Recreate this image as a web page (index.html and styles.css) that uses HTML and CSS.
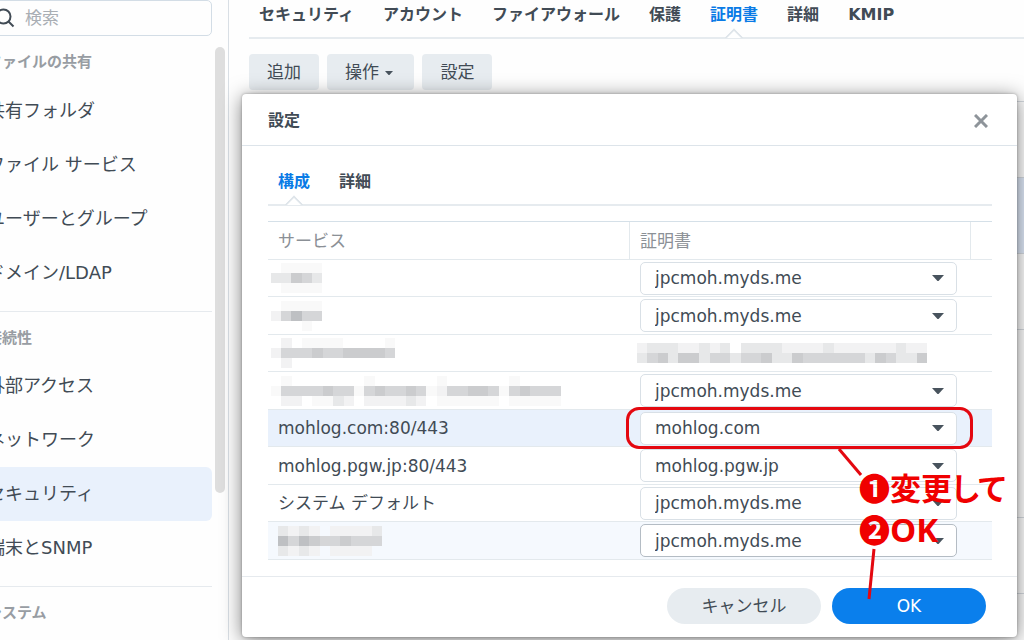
FILE: index.html
```html
<!DOCTYPE html>
<html lang="ja">
<head>
<meta charset="utf-8">
<title>セキュリティ - 証明書</title>
<link rel="stylesheet" href="styles.css">
</head>
<body>
<div class="app">
  <aside class="sidebar">
    <div class="nav">
      <label class="search">
        <svg class="search-icon" viewBox="0 0 20 20" width="20" height="20" aria-hidden="true"><circle cx="8.500" cy="8.500" r="7"/><path d="M13.500 13.500l5 5"/></svg>
        <input type="text" placeholder="検索" aria-label="検索">
      </label>
      <section class="group">
        <h2>ファイルの共有</h2>
        <a href="#">共有フォルダ</a>
        <a href="#">ファイル サービス</a>
        <a href="#">ユーザーとグループ</a>
        <a href="#">ドメイン/LDAP</a>
      </section>
      <section class="group">
        <h2>接続性</h2>
        <a href="#">外部アクセス</a>
        <a href="#">ネットワーク</a>
        <a href="#" class="active">セキュリティ</a>
        <a href="#">端末とSNMP</a>
      </section>
      <section class="group">
        <h2>システム</h2>
      </section>
    </div>
    <div class="scrollbar"></div>
  </aside>
  <main class="main">
    <nav class="tabs">
      <a href="#">セキュリティ</a>
      <a href="#">アカウント</a>
      <a href="#">ファイアウォール</a>
      <a href="#">保護</a>
      <a href="#" class="current">証明書</a>
      <a href="#">詳細</a>
      <a href="#">KMIP</a>
    </nav>
    <div class="toolbar">
      <button type="button">追加</button>
      <button type="button">操作 <svg class="caret" viewBox="0 0 12 6" width="8" height="4" aria-hidden="true"><path d="M0 0h12l-5 5.500q-1 1-2 0z"/></svg></button>
      <button type="button">設定</button>
    </div>
    <div class="certs">
      <div class="cert"></div>
      <div class="cert picked"></div>
      <div class="cert"></div>
      <div class="cert tall"></div>
      <div class="cert"></div>
      <div class="cert"></div>
    </div>
  </main>
</div>

<div class="dialog" role="dialog" aria-labelledby="dialog-title">
  <header class="dialog-head">
    <h1 id="dialog-title">設定</h1>
    <button type="button" class="close" aria-label="閉じる"><svg viewBox="0 0 14 14" width="14" height="14" aria-hidden="true"><path d="M1 1l12 12M13 1l-12 12"/></svg></button>
  </header>
  <div class="dialog-body">
    <nav class="tabs inner">
      <a href="#" class="current">構成</a>
      <a href="#">詳細</a>
    </nav>
    <table class="services">
      <colgroup><col><col class="col-cert"><col class="col-end"></colgroup>
      <thead><tr><th scope="col">サービス</th><th scope="col">証明書</th><th></th></tr></thead>
      <tbody>
        <tr>
          <td><svg class="mosaic lead w5" viewBox="0 0 5 3" preserveAspectRatio="none"><path class="g1" d="M1 0h4v3h-4z"/><path class="g3" d="M0 1h2v1h-2zM4 1h1v1h-1z"/><path class="g5" d="M2 1h1v1h-1z"/><path class="g4" d="M3 1h1v1h-1z"/></svg></td>
          <td><div class="pick"><select aria-label="証明書 1"><option>jpcmoh.myds.me</option></select><svg class="caret" viewBox="0 0 12 6" width="12" height="6"><path d="M0 0h12l-5 5.500q-1 1-2 0z"/></svg></div></td><td></td>
        </tr>
        <tr>
          <td><svg class="mosaic lead w5" viewBox="0 0 5 3" preserveAspectRatio="none"><path class="g1" d="M1 0h4v1h-4zM3 2h1v1h-1z"/><path class="g2" d="M0 1h1v1h-1z"/><path class="g4" d="M1 1h1v1h-1zM3 1h2v1h-2z"/><path class="g6" d="M2 1h1v1h-1z"/></svg></td>
          <td><div class="pick"><select aria-label="証明書 2"><option>jpcmoh.myds.me</option></select><svg class="caret" viewBox="0 0 12 6" width="12" height="6"><path d="M0 0h12l-5 5.500q-1 1-2 0z"/></svg></div></td><td></td>
        </tr>
        <tr>
          <td><svg class="mosaic lead w12" viewBox="0 0 12 3" preserveAspectRatio="none"><path class="g1" d="M3 0h4v1h-4zM11 0h1v1h-1z"/><path class="g2" d="M1 0h1v3h-1zM0 1h1v1h-1z"/><path class="g4" d="M1 1h11v1h-11z"/><path class="g5" d="M4 1h1v1h-1zM7 1h4v1h-4z"/></svg></td>
          <td><svg class="mosaic cert-name w28" viewBox="0 0 28 2" preserveAspectRatio="none"><path class="g2" d="M0 0h9v1h-9zM10 0h18v1h-18z"/><path class="g3" d="M0 1h28v1h-28zM1 0h3v1h-3zM6 0h1v1h-1zM8 0h1v1h-1zM10 0h4v1h-4zM18 0h1v1h-1zM25 0h1v1h-1z"/><path class="g4" d="M1 1h2v1h-2zM4 1h2v1h-2zM7 1h2v1h-2zM10 1h3v1h-3zM15 1h7v1h-7zM23 1h2v1h-2zM27 1h1v1h-1z"/><path class="g5" d="M2 1h1v1h-1zM4 1h2v1h-2zM12 1h1v1h-1zM15 1h1v1h-1zM23 1h1v1h-1zM27 1h1v1h-1z"/></svg></td><td></td>
        </tr>
        <tr>
          <td><svg class="mosaic lead w28" viewBox="0 0 28 3" preserveAspectRatio="none"><path class="g1" d="M1 0h1v1h-1zM9 0h1v1h-1zM16 0h1v1h-1zM23 0h1v1h-1zM4 2h2v1h-2zM16 2h6v1h-6zM23 2h5v1h-5zM0 1h28v1h-28z"/><path class="g2" d="M1 2h2v1h-2zM7 2h1v1h-1zM9 2h4v1h-4zM14 2h1v1h-1zM16 1h1v1h-1z"/><path class="g3" d="M6 2h1v1h-1zM13 2h1v1h-1z"/><path class="g4" d="M1 1h7v1h-7zM9 1h6v1h-6zM17 1h5v1h-5zM23 1h5v1h-5z"/><path class="g5" d="M5 1h1v1h-1zM10 1h1v1h-1zM13 1h1v1h-1zM19 1h2v1h-2zM24 1h1v1h-1z"/></svg></td>
          <td><div class="pick"><select aria-label="証明書 4"><option>jpcmoh.myds.me</option></select><svg class="caret" viewBox="0 0 12 6" width="12" height="6"><path d="M0 0h12l-5 5.500q-1 1-2 0z"/></svg></div></td><td></td>
        </tr>
        <tr class="selected">
          <td>mohlog.com:80/443</td>
          <td><div class="pick"><select aria-label="mohlog.com:80/443"><option>mohlog.com</option></select><svg class="caret" viewBox="0 0 12 6" width="12" height="6"><path d="M0 0h12l-5 5.500q-1 1-2 0z"/></svg></div></td><td></td>
        </tr>
        <tr>
          <td>mohlog.pgw.jp:80/443</td>
          <td><div class="pick"><select aria-label="mohlog.pgw.jp:80/443"><option>mohlog.pgw.jp</option></select><svg class="caret" viewBox="0 0 12 6" width="12" height="6"><path d="M0 0h12l-5 5.500q-1 1-2 0z"/></svg></div></td><td></td>
        </tr>
        <tr>
          <td>システム デフォルト</td>
          <td><div class="pick"><select aria-label="システム デフォルト"><option>jpcmoh.myds.me</option></select><svg class="caret" viewBox="0 0 12 6" width="12" height="6"><path d="M0 0h12l-5 5.500q-1 1-2 0z"/></svg></div></td><td></td>
        </tr>
        <tr class="hover">
          <td><svg class="mosaic w10" viewBox="0 0 10 3" preserveAspectRatio="none"><path class="g2" d="M0 0h4v3h-4zM5 0h5v1h-5zM5 2h4v1h-4z"/><path class="g3" d="M0 0h1v1h-1zM2 0h1v3h-1zM0 2h1v1h-1zM9 0h1v1h-1z"/><path class="g4" d="M1 1h9v1h-9z"/><path class="g5" d="M3 1h1v1h-1zM6 1h1v1h-1z"/><path class="g6" d="M0 1h1v1h-1zM2 1h1v1h-1z"/></svg></td>
          <td><div class="pick"><select aria-label="証明書 8"><option>jpcmoh.myds.me</option></select><svg class="caret" viewBox="0 0 12 6" width="12" height="6"><path d="M0 0h12l-5 5.500q-1 1-2 0z"/></svg></div></td><td></td>
        </tr>
      </tbody>
    </table>
  </div>
  <footer class="dialog-foot">
    <button type="button" class="pill">キャンセル</button>
    <button type="button" class="pill primary">OK</button>
  </footer>
  <div class="marks">
    <div class="mark-box"></div>
    <svg class="mark-lines" viewBox="0 0 60 160" width="60" height="160" aria-hidden="true"><path d="M10 9l22 26"/><path d="M45 109l-5 50"/></svg>
    <p class="note note-1">❶変更して</p>
    <p class="note note-2">❷<span class="latin">OK</span></p>
  </div>
</div>
</body>
</html>
```
FILE: styles.css
```css
* { box-sizing: border-box; }
body {
  margin: 0;
  height: 100vh;
  overflow: hidden;
  position: relative;
  background: #fefefe;
  color: #414b55;
  font: 17px/24px "DejaVu Sans", "Noto Sans CJK JP", sans-serif;
}
a { color: inherit; text-decoration: none; }
button, input, select { font: inherit; color: inherit; border: 0; }
h1, h2, p { margin: 0; }

.app { display: flex; height: 100%; }

/* Sidebar */
.sidebar {
  display: flex;
  gap: 3px;
  flex: 0 0 229px;
  border-right: 1px solid #d9dfe5;
  overflow: hidden;
}
.nav { flex: 1; min-width: 0; margin-left: -30px; }
.search {
  display: flex;
  align-items: center;
  gap: 10px;
  height: 36px;
  padding-left: 24px;
  border: 1px solid #d3dde6;
  border-radius: 5px;
}
.search-icon { flex: none; fill: none; stroke: #414b55; stroke-width: 2; }
.search input { flex: 1; min-width: 0; padding: 0; background: none; outline: 0; }
.search input::placeholder { color: #a9aeb4; opacity: 1; }
.group { padding-bottom: 11px; border-bottom: 1px solid #e6eaee; }
.group h2 {
  padding: 14px 17px 10px;
  font-size: 15px;
  line-height: 24px;
  font-weight: 700;
  color: #989da3;
}
.group + .group h2 { padding-bottom: 9px; }
.group a {
  display: block;
  padding: 15px 17px;
  font-size: 18px;
  border-radius: 6px;
}
.group a.active { background: #e9f1fc; }
.scrollbar {
  flex: 0 0 10px;
  height: 446px;
  margin: 47px 3px 0 0;
  border-radius: 5px;
  background: #dedede;
}

/* Page */
.main { flex: 1; min-width: 0; padding-left: 20px; }
.tabs {
  display: flex;
  gap: 29px;
  padding: 3px 10px 10px;
  border-bottom: 2px solid #e6ebef;
  font-size: 16px;
  font-weight: 700;
  white-space: nowrap;
}
.tabs a { position: relative; }
.tabs .current { color: #0a7be6; }
.tabs .current::after {
  content: "";
  position: absolute;
  left: 50%;
  bottom: -18px;
  width: 12px;
  height: 12px;
  margin-left: -7px;
  background: #fff;
  border: solid #dfe5ea;
  border-width: 2px 0 0 2px;
  transform: rotate(45deg);
  clip-path: polygon(0 0, 100% 0, 0 100%);
}
.toolbar { display: flex; gap: 8px; padding: 15px 0 11px; }
.toolbar button {
  height: 36px;
  padding: 0 18px;
  border-radius: 4px;
  background: #e7ecf0;
}
.caret { fill: #48535d; }
.toolbar .caret { margin: 0 3px 0 1px; vertical-align: 3px; }
.cert { height: 76px; border-top: 1px solid #d5dae0; }
.picked { background: #dfe9f8; }
.tall { height: 188px; }

/* Dialog */
.dialog {
  position: absolute;
  top: 94px;
  left: 242px;
  right: 7px;
  background: #fff;
  border-radius: 4px;
  box-shadow: 0 3px 20px rgba(0, 0, 0, .5), 0 0 3px rgba(0, 0, 0, .3);
}
.dialog-head {
  display: flex;
  align-items: center;
  justify-content: space-between;
  padding: 15px 25px 12px 26px;
  border-bottom: 1px solid #dde4ea;
}
.dialog-head h1 { font-size: 16px; line-height: 24px; }
.close { display: flex; padding: 4px; background: none; }
.close svg { fill: none; stroke: #8e949a; stroke-width: 3; }
.dialog-body { padding: 21px 25px 16px 26px; }
.inner { margin-bottom: 15px; }

.services {
  width: 100%;
  table-layout: fixed;
  border-spacing: 0;
  border-top: 1px solid #d5e0e8;
}
.col-cert { width: 341px; }
.col-end { width: 21px; }
.services th {
  height: 38px;
  padding: 0 10px;
  text-align: left;
  font-weight: 400;
  color: #8b9096;
  border-bottom: 1px solid #e3e9ed;
  border-right: 1px solid #e3e9ed;
}
.services th:last-child { border-right: 0; }
.services td {
  height: 37px;
  padding: 0 10px;
  border-bottom: 1px solid #e3e9ed;
}
.services tr:nth-child(even) td { height: 38px; }
.selected td { background: #e9f1fc; }
.hover td { background: #f5f9fe; }
.pick { display: grid; align-items: center; margin-right: 4px; }
.pick > * { grid-area: 1 / 1; }
.pick .caret { justify-self: end; margin-right: 13px; pointer-events: none; }
.pick select {
  appearance: none;
  width: 100%;
  height: 33px;
  padding: 0 14px;
  border: 1px solid #d9e0e6;
  border-radius: 5px;
  background: #fff;
}
.hover select { border-color: #b4bcc4; }

/* Redacted names */
.mosaic { display: block; height: 30px; shape-rendering: crispEdges; }
.lead { margin-left: -7px; }
.cert-name { height: 20px; margin-left: -3px; }
.w5 { width: 51px; }
.w10 { width: 104px; }
.w12 { width: 124px; }
.w28 { width: 290px; }
.g1 { fill: #f9f9f9; }
.g2 { fill: #f2f2f3; }
.g3 { fill: #e7e8e9; }
.g4 { fill: #d5d6d8; }
.g5 { fill: #cbccce; }
.g6 { fill: #bec0c3; }

.dialog-foot {
  display: flex;
  justify-content: flex-end;
  gap: 11px;
  padding: 11px 31px 13px;
  border-top: 1px solid #e6eaee;
}
.pill {
  width: 154px;
  height: 36px;
  border-radius: 18px;
  background: #e7ecf0;
}
.primary { background: #0a7fec; color: #fff; }

/* Callouts drawn over the dialog */
.marks { position: absolute; inset: 0; pointer-events: none; color: #f00000; }
.mark-box {
  position: absolute;
  top: 313px;
  right: 44px;
  width: 347px;
  height: 42px;
  border: 3px solid #e40810;
  border-radius: 13px;
}
.mark-lines {
  position: absolute;
  top: 346px;
  right: 128px;
  fill: none;
  stroke: #e40810;
  stroke-width: 3;
}
.note {
  position: absolute;
  left: 617px;
  font: 700 31px/42px "Noto Sans CJK JP", sans-serif;
  font-feature-settings: "palt";
  white-space: nowrap;
}
.latin { font-family: "Open Sans", sans-serif; font-size: 33px; }
.note-1 { top: 372px; }
.note-2 { top: 414px; }
```
